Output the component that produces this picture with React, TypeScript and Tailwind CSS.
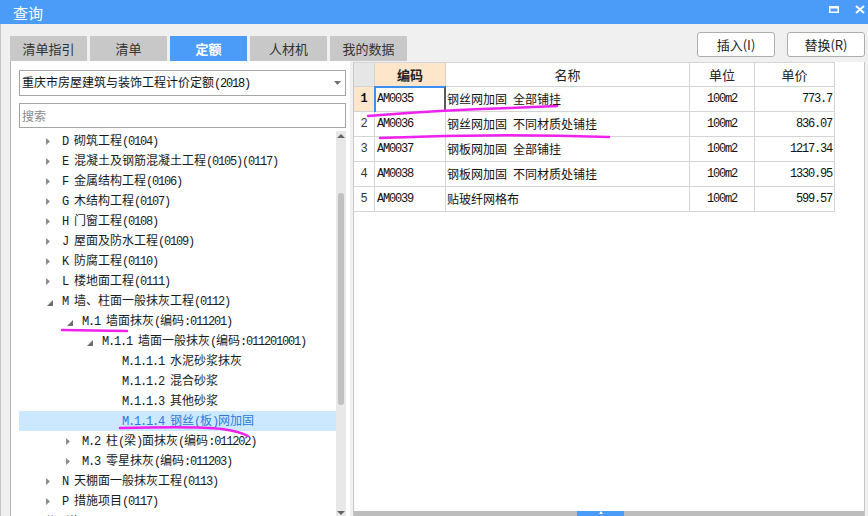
import React from "react";

type TreeNode = {
  level: number;
  arrow?: "open" | "closed";
  text: string;
  selected?: boolean;
};

const TREE: TreeNode[] = [
  { level: 0, arrow: "closed", text: "D 砌筑工程(0104)" },
  { level: 0, arrow: "closed", text: "E 混凝土及钢筋混凝土工程(0105)(0117)" },
  { level: 0, arrow: "closed", text: "F 金属结构工程(0106)" },
  { level: 0, arrow: "closed", text: "G 木结构工程(0107)" },
  { level: 0, arrow: "closed", text: "H 门窗工程(0108)" },
  { level: 0, arrow: "closed", text: "J 屋面及防水工程(0109)" },
  { level: 0, arrow: "closed", text: "K 防腐工程(0110)" },
  { level: 0, arrow: "closed", text: "L 楼地面工程(0111)" },
  { level: 0, arrow: "open", text: "M 墙、柱面一般抹灰工程(0112)" },
  { level: 1, arrow: "open", text: "M.1 墙面抹灰(编码:011201)" },
  { level: 2, arrow: "open", text: "M.1.1 墙面一般抹灰(编码:011201001)" },
  { level: 3, text: "M.1.1.1 水泥砂浆抹灰" },
  { level: 3, text: "M.1.1.2 混合砂浆" },
  { level: 3, text: "M.1.1.3 其他砂浆" },
  { level: 3, text: "M.1.1.4 钢丝(板)网加固", selected: true },
  { level: 1, arrow: "closed", text: "M.2 柱(梁)面抹灰(编码:011202)" },
  { level: 1, arrow: "closed", text: "M.3 零星抹灰(编码:011203)" },
  { level: 0, arrow: "closed", text: "N 天棚面一般抹灰工程(0113)" },
  { level: 0, arrow: "closed", text: "P 措施项目(0117)" },
  { level: -1, arrow: "closed", text: "附录说明" },
];

const ROWS = [
  { no: 1, code: "AM0035", name: "钢丝网加固 全部铺挂", unit: "100m2", price: "773.7" },
  { no: 2, code: "AM0036", name: "钢丝网加固 不同材质处铺挂", unit: "100m2", price: "836.07" },
  { no: 3, code: "AM0037", name: "钢板网加固 全部铺挂", unit: "100m2", price: "1217.34" },
  { no: 4, code: "AM0038", name: "钢板网加固 不同材质处铺挂", unit: "100m2", price: "1330.95" },
  { no: 5, code: "AM0039", name: "贴玻纤网格布", unit: "100m2", price: "599.57" },
];

const TABS = ["清单指引", "清单", "定额", "人材机", "我的数据"];

const INDENT: Record<number, string> = {
  [-1]: "pl-[6px]",
  0: "pl-[26px]",
  1: "pl-[46px]",
  2: "pl-[66px]",
  3: "pl-[86px]",
};

// ascii runs in a narrow mono face, like the half-width latin of the original
const Mixed = ({ text }: { text: string }) => (
  <>
    {(text.match(/[ -~]+|[^ -~]+/g) ?? []).map((part, i) =>
      /^[ -~]/.test(part) ? (
        <span
          key={i}
          className="font-['Liberation_Mono',monospace] text-[12px] tracking-[-1.2px] whitespace-pre"
        >
          {part}
        </span>
      ) : (
        <span key={i}>{part}</span>
      ),
    )}
  </>
);

const TreeRow = ({ node }: { node: TreeNode }) => (
  <div
    className={`flex items-center h-5 shrink-0 whitespace-nowrap ${INDENT[node.level]} ${
      node.selected ? "bg-[#cce8ff] text-[#2a7ae2]" : "text-[#1a1a1a]"
    }`}
  >
    <span className="w-[17px] h-5 flex items-center shrink-0">
      {node.arrow === "closed" && (
        <svg width="4" height="7" className="ml-[1px]">
          <path d="M0 0L4 3.5L0 7Z" fill="#8c8c8c" />
        </svg>
      )}
      {node.arrow === "open" && (
        <svg width="6" height="6" className="ml-[2px] mt-[4px]">
          <path d="M6 0L6 6L0 6Z" fill="#6e6e6e" />
        </svg>
      )}
    </span>
    <span className="text-[12px] leading-5">
      <Mixed text={node.text} />
    </span>
  </div>
);

const Scrollbar = () => (
  <div className="w-[10px] h-full bg-[#e8e8e8] flex flex-col items-center shrink-0">
    <svg width="8" height="4" className="mt-[3px] shrink-0">
      <path d="M4 0L8 4L0 4Z" fill="#666" />
    </svg>
    <div className="mt-[55px] w-[6px] h-[212px] rounded-[3px] bg-[#c1c1c1] shrink-0" />
    <div className="flex-1" />
    <svg width="8" height="4" className="mb-[4px] shrink-0">
      <path d="M0 0L8 0L4 4Z" fill="#666" />
    </svg>
  </div>
);

const COLS = "grid grid-cols-[21px_71px_244px_65px_80px]";
const CELL = "border-r border-b border-[#d4d4d4] flex items-center";

export default function App() {
  return (
    <div className="relative w-[868px] h-[516px] overflow-hidden bg-[#f0f0f0] font-['Noto_Sans_CJK_SC',sans-serif]">
      {/* title bar */}
      <div className="h-[24px] bg-[#4a9cf8] flex items-center pl-[13px] pr-[3px]">
        <span className="text-white text-[15px] leading-none">查询</span>
        <svg width="10" height="7" className="ml-auto self-start mt-[6px]">
          <path d="M0 0H10V7H0Z M1.5 2.5V5.5H8.5V2.5Z" fill="white" fillRule="evenodd" />
        </svg>
        <svg width="10" height="9" className="ml-[16px] self-start mt-[5px]">
          <path d="M1 1L9 8M9 1L1 8" stroke="white" strokeWidth="2" />
        </svg>
      </div>

      <div className="flex items-start border-l border-[#c4c4c4]">
        {/* left column */}
        <div className="ml-[9px] w-[340px] pt-[12px] flex flex-col shrink-0">
          <div className="flex gap-[3px] h-[25px] shrink-0">
            {TABS.map((t) => (
              <div
                key={t}
                className={`w-[77px] shrink-0 flex items-center justify-center text-[13px] ${
                  t === "定额"
                    ? "bg-[#4a9cf8] text-white font-bold"
                    : "bg-[#c8c8c8] text-[#333]"
                }`}
              >
                {t}
              </div>
            ))}
          </div>
          <div className="bg-white border-l border-[#b4b4b4] pl-[8px] pr-[4px] pt-[9px] h-[460px] shrink-0 flex flex-col">
            <div className="h-[26px] shrink-0 border border-[#a5a5a5] bg-white flex items-center justify-between pl-[2px] pr-[4px] text-[12px] text-[#111]">
              <span className="whitespace-nowrap">
                <Mixed text="重庆市房屋建筑与装饰工程计价定额(2018)" />
              </span>
              <svg width="7" height="4">
                <path d="M0 0L7 0L3.5 4Z" fill="#707070" />
              </svg>
            </div>
            <div className="mt-[7px] h-[25px] shrink-0 border border-[#a5a5a5] bg-white flex items-center pl-[2px] text-[12px] text-[#8a8a8a]">
              搜索
            </div>
            <div className="mt-[3px] h-[388px] shrink-0 flex">
              <div className="flex-1 overflow-hidden">
                {TREE.map((n) => (
                  <TreeRow key={n.text} node={n} />
                ))}
              </div>
              <Scrollbar />
            </div>
          </div>
        </div>

        {/* right column */}
        <div className="ml-[3px] w-[512px] flex flex-col shrink-0">
          <div className="pt-[8px] flex justify-end gap-3">
            {["插入(I)", "替换(R)"].map((b) => (
              <button
                key={b}
                className="w-[78px] h-[25px] border border-[#adadad] rounded-[3px] bg-white text-[13px] text-[#222] flex items-center justify-center"
              >
                {b}
              </button>
            ))}
          </div>
          <div className="mt-[5px] h-[454px] shrink-0 bg-white border-l border-r border-[#c8c8c8] flex flex-col">
            <div className="w-[481px] border-t border-[#d4d4d4]">
              <div className={`${COLS} h-[24px] text-[13px] text-[#222]`}>
                <div className={`${CELL} bg-[#e6e6e6]`} />
                <div className={`${CELL} justify-center bg-[#fde6ca] font-bold`}>编码</div>
                <div className={`${CELL} justify-center`}>名称</div>
                <div className={`${CELL} justify-center`}>单位</div>
                <div className={`${CELL} justify-center`}>单价</div>
              </div>
              {ROWS.map((r) => (
                <div key={r.no} className={`${COLS} h-[25px] text-[12px] text-[#111]`}>
                  <div
                    className={`${CELL} justify-center font-['Liberation_Mono',monospace] ${
                      r.no === 1 ? "bg-[#fde6ca] font-bold" : "text-[#333]"
                    }`}
                  >
                    {r.no}
                  </div>
                  <div className={`${CELL} pl-[2px] relative`}>
                    <Mixed text={r.code} />
                    {r.no === 1 && (
                      <div className="absolute -top-px -left-px w-[72px] h-[26px] border-t-2 border-l-2 border-r-2 border-[#3d8ff2] border-r-[#5a5a5a] pointer-events-none" />
                    )}
                  </div>
                  <div className={`${CELL} pl-[1px] whitespace-nowrap`}>
                    <Mixed text={r.name} />
                  </div>
                  <div className={`${CELL} justify-center`}>
                    <Mixed text={r.unit} />
                  </div>
                  <div className={`${CELL} justify-end pr-[2px]`}>
                    <Mixed text={r.price} />
                  </div>
                </div>
              ))}
            </div>
            <div className="flex-1" />
            <div className="h-[5px] bg-[#bdbdbd] flex shrink-0">
              <div className="ml-[223px] w-[47px] bg-[#4a9cf8] flex justify-center">
                <svg width="4" height="3">
                  <path d="M2 0L4 3L0 3Z" fill="white" />
                </svg>
              </div>
            </div>
          </div>
        </div>
      </div>

      {/* hand-drawn marker annotations */}
      <svg
        className="absolute inset-0 pointer-events-none"
        width="868"
        height="516"
        fill="none"
        stroke="#f020ee"
        strokeWidth="2.5"
        strokeLinecap="round"
      >
        <path d="M368 116 Q440 110 510 108 L557 106" />
        <path d="M380 138 Q495 133 609 137" />
        <path d="M62 330 L127 331" />
        <path d="M120 428 Q200 426 222 429 Q238 431 248 436" />
      </svg>
    </div>
  );
}
